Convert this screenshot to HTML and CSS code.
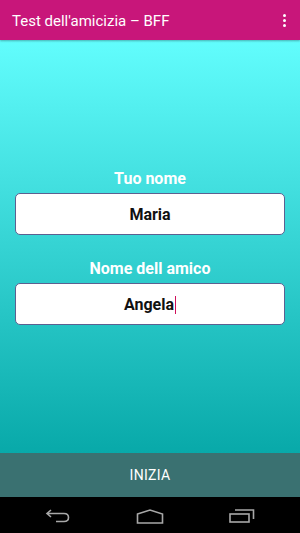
FILE: index.html
```html
<!DOCTYPE html>
<html>
<head>
  <title>Test dell'amicizia – BFF</title>
  <link rel="stylesheet" href="styles.css">
</head>
<body>
  <div class="app">
    <div class="toolbar">
      <span class="title">Test dell'amicizia – BFF</span>
      <span class="menu"><i></i><i></i><i></i></span>
    </div>

    <div class="main">
      <div class="field">
        <div class="label">Tuo nome</div>
        <div class="input">Maria</div>
      </div>
      <div class="field">
        <div class="label">Nome dell amico</div>
        <div class="input">Angela<span class="cursor"></span></div>
      </div>
    </div>

    <button class="start">INIZIA</button>

    <div class="navbar">
      <svg width="26" height="14" viewBox="0 0 26 14">
        <path d="M6 1 L2 4.5 L6 8 M2 4.5 H19 Q23.5 4.5 23.5 8.5 Q23.5 12.5 19 12.5 H11" fill="none" stroke="#a8a8a8" stroke-width="1.6"/>
      </svg>
      <svg width="28" height="15" viewBox="0 0 28 15">
        <path d="M1.5 5 L14 1 L26.5 5 V14 H1.5 Z" fill="none" stroke="#a8a8a8" stroke-width="1.6"/>
      </svg>
      <svg width="26" height="14" viewBox="0 0 26 14">
        <path d="M6 1 H24.5 V10" fill="none" stroke="#a8a8a8" stroke-width="1.6"/>
        <rect x="1" y="5" width="19" height="8" fill="none" stroke="#a8a8a8" stroke-width="1.6"/>
      </svg>
    </div>
  </div>
</body>
</html>
```

FILE: styles.css
```css
body {
  margin: 0;
  font-family: Roboto, "Liberation Sans", sans-serif;
}

.app {
  width: 300px;
  height: 533px;
  display: flex;
  flex-direction: column;
}

.toolbar {
  height: 40px;
  background-color: #c8167a;
  color: #fff;
  display: flex;
  align-items: center;
  justify-content: space-between;
  padding: 0 14px 0 12px;
  box-shadow: 0 1px 2px rgba(0, 0, 0, 0.3);
  position: relative;
  z-index: 1;
}

.title {
  font-size: 15px;
  padding-top: 1px;
}

.menu {
  display: flex;
  flex-direction: column;
  gap: 2px;
}

.menu i {
  width: 3px;
  height: 3px;
  background-color: #fff;
  border-radius: 50%;
}

.main {
  flex: 1;
  background: linear-gradient(#62fdfd, #08a9a9);
  display: flex;
  flex-direction: column;
  justify-content: center;
  gap: 24px;
  padding: 0 15px;
}

.label {
  color: #fff;
  font-weight: bold;
  font-size: 16px;
  line-height: 20px;
  text-align: center;
  margin-bottom: 4px;
}

.input {
  height: 40px;
  background-color: #fff;
  border: 1px solid #5c6090;
  border-radius: 5px;
  display: flex;
  align-items: center;
  justify-content: center;
  padding-top: 2px;
  box-sizing: border-box;
  height: 42px;
  font-weight: bold;
  font-size: 16px;
  color: #111;
}

.cursor {
  width: 1px;
  height: 18px;
  background-color: #d0105a;
  margin-left: 1px;
}

.start {
  height: 44px;
  border: none;
  background-color: #3a7171;
  color: #fff;
  font-family: Roboto, "Liberation Sans", sans-serif;
  font-size: 14px;
  letter-spacing: 0.3px;
  padding: 0;
}

.navbar {
  height: 36px;
  background-color: #000;
  display: flex;
  align-items: center;
  justify-content: center;
  gap: 65px;
  padding-top: 2px;
  box-sizing: border-box;
}
```
